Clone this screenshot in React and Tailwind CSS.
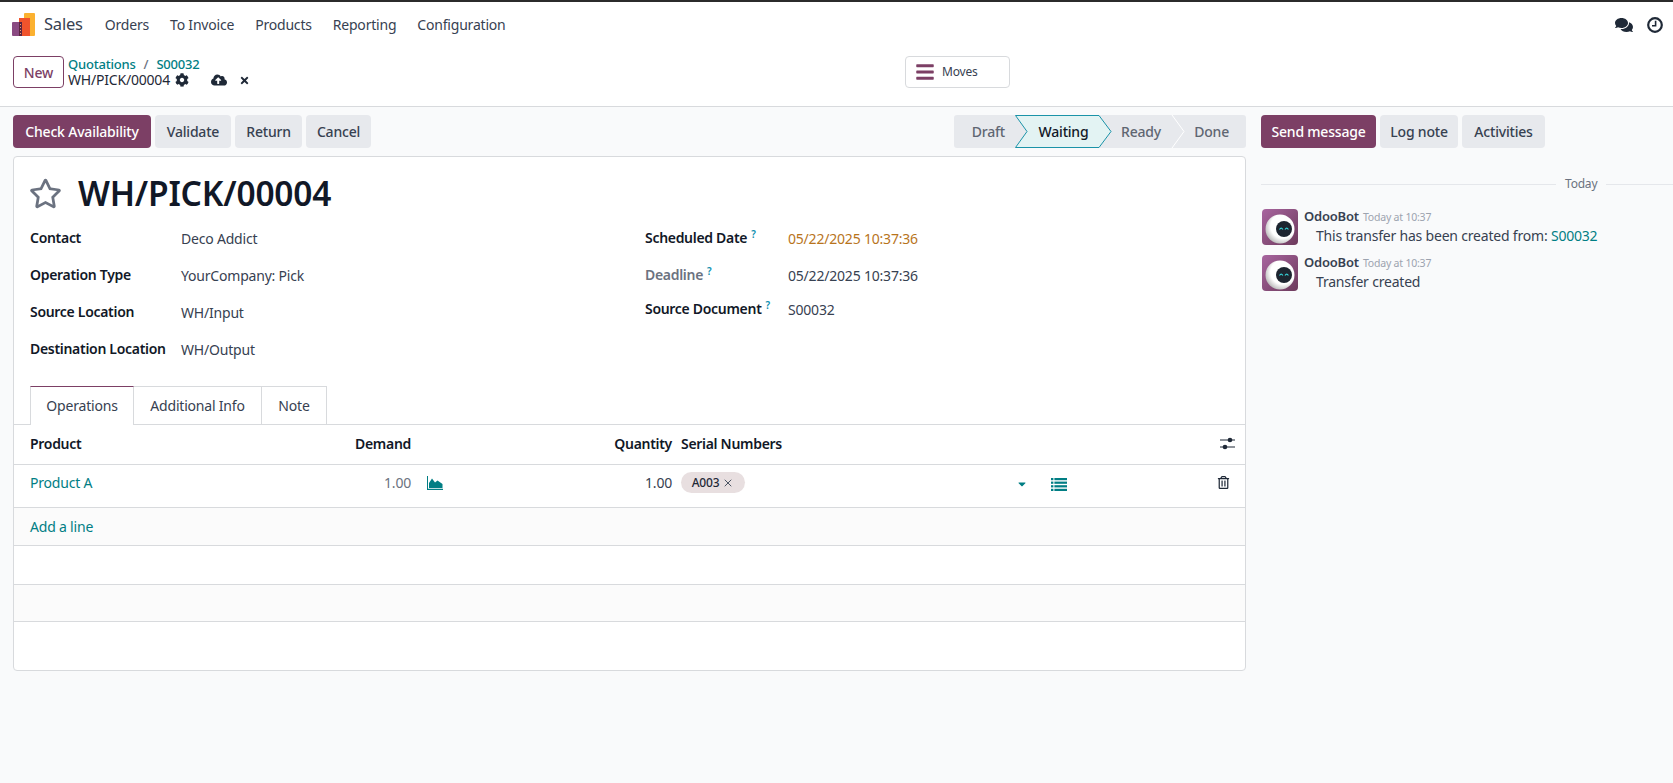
import React from 'react';
import { X } from 'lucide-react';
import { FaCog, FaCloudUploadAlt, FaTimes, FaRegStar, FaComments, FaRegTrashAlt, FaBars, FaCaretDown } from 'react-icons/fa';

const menu = ['Orders', 'To Invoice', 'Products', 'Reporting', 'Configuration'];

const leftFields = [
  ['Contact', 'Deco Addict'],
  ['Operation Type', 'YourCompany: Pick'],
  ['Source Location', 'WH/Input'],
  ['Destination Location', 'WH/Output'],
];

const rowGrid = 'grid grid-cols-[270px_111px_149px_112px_356px_1fr] items-center pl-[16px] pr-[14px]';

const Logo = () => (
  <svg width="24" height="24" viewBox="0 0 24 24" className="shrink-0">
    <rect x="12" y="0" width="11" height="23" rx="1" fill="#fbb130" />
    <rect x="7" y="5" width="11" height="18" fill="#f0532c" />
    <rect x="0" y="9" width="9" height="14" rx="1" fill="#8a4a82" />
    <rect x="7" y="9" width="3" height="14" fill="#5b2540" />
    <rect x="8" y="11" width="1" height="1" fill="#f0a070" />
    <rect x="8" y="14" width="1" height="1" fill="#f0a070" />
    <rect x="8" y="17" width="1" height="1" fill="#f0a070" />
    <rect x="8" y="20" width="1" height="1" fill="#f0a070" />
  </svg>
);

const BotAvatar = ({ id }) => (
  <svg width="36" height="36" viewBox="0 0 36 36" className="shrink-0 rounded-[4px]">
    <defs>
      <linearGradient id={`bg${id}`} x1="0" y1="0" x2="1" y2="1">
        <stop offset="0" stopColor="#a8659f" />
        <stop offset="1" stopColor="#6d3a5c" />
      </linearGradient>
      <radialGradient id={`ball${id}`} cx="0.6" cy="0.4" r="0.7">
        <stop offset="0.6" stopColor="#ffffff" />
        <stop offset="1" stopColor="#a9a9a9" />
      </radialGradient>
    </defs>
    <rect width="36" height="36" fill={`url(#bg${id})`} />
    <circle cx="18" cy="20" r="14.5" fill={`url(#ball${id})`} />
    <circle cx="22" cy="20" r="8" fill="#1d2530" />
    <path d="M17.5 20.5 q1.7 -2.6 3.4 0 M23 20.5 q1.7 -2.6 3.4 0" stroke="#35d0d6" strokeWidth="1.2" fill="none" />
  </svg>
);

const ClockIcon = () => (
  <svg width="16" height="16" viewBox="0 0 16 16" fill="none" stroke="#1f2937">
    <circle cx="8" cy="8" r="6.8" strokeWidth="2.2" />
    <path d="M8.6 3.8 V8.8 H5" strokeWidth="1.6" />
  </svg>
);

const AreaIcon = () => (
  <svg width="16" height="14" viewBox="0 0 16 14" fill="#017e84">
    <path d="M0 0 H1 V12.8 H16 V14 H0 Z" />
    <path d="M2 12 V7 L5 2.5 L8 6.5 L10.5 4.5 L15.5 8 V12 Z" />
  </svg>
);

const ListIcon = () => (
  <svg width="16" height="13" viewBox="0 0 16 13" fill="#017e84">
    <rect x="0" y="0" width="2.4" height="2.2" />
    <rect x="3.4" y="0" width="12.6" height="2.2" />
    <rect x="0" y="3.6" width="2.4" height="2.2" />
    <rect x="3.4" y="3.6" width="12.6" height="2.2" />
    <rect x="0" y="7.2" width="2.4" height="2.2" />
    <rect x="3.4" y="7.2" width="12.6" height="2.2" />
    <rect x="0" y="10.8" width="2.4" height="2.2" />
    <rect x="3.4" y="10.8" width="12.6" height="2.2" />
  </svg>
);

const Help = () => <sup className="ml-[4px] text-[10px] font-semibold text-[#0e8fb0]">?</sup>;

const ActionBtn = ({ children, primary, className }) => (
  <button className={`h-[33px] rounded-[4px] text-[14px] font-medium ${primary ? 'bg-[#7c3f65] text-white' : 'bg-[#e7e9ed] text-[#374151]'} ${className}`}>
    {children}
  </button>
);

const Statusbar = () => (
  <div className="flex h-[33px] w-[292px] rounded-[3px] bg-[#e7e9ed] text-[14px] font-medium text-[#5f6672]">
    <div className="flex w-[61px] items-center justify-end pr-[10px]">Draft</div>
    <div className="relative flex w-[97px] items-center justify-center text-[#111827]">
      <svg viewBox="0 0 97 33" className="absolute inset-0 h-full w-full">
        <path d="M0.5 0.5 H84 L96 16.5 L84 32.5 H0.5 L12 16.5 Z" fill="#e3f3f3" stroke="#1a93a8" />
      </svg>
      <span className="relative">Waiting</span>
    </div>
    <div className="flex w-[56px] items-center justify-end pr-[7px]">Ready</div>
    <div className="relative flex flex-1 items-center justify-end pr-[17px]">
      <svg viewBox="0 0 16 33" className="absolute left-[3px] top-0 h-[33px] w-[16px]">
        <path d="M1 0 L13 16.5 L1 33" fill="none" stroke="#ffffff" />
      </svg>
      Done
    </div>
  </div>
);

export default function App() {
  return (
    <div className="flex h-[783px] flex-col overflow-hidden bg-[#f9fafb] font-['Noto_Sans',sans-serif] text-[14px] tracking-[-0.2px] text-[#374151]">
      <header className="border-t-2 border-[#2b2b2b] bg-white">
        <nav className="flex h-[45px] items-center pl-[12px] pr-[10px]">
          <Logo />
          <span className="ml-[8px] text-[16.5px] text-[#374151]">Sales</span>
          <div className="ml-[22px] flex gap-[21px] text-[14px] text-[#374151]">
            {menu.map((m) => <span key={m}>{m}</span>)}
          </div>
          <div className="ml-auto flex items-center gap-[14px] text-[#1f2937]">
            <FaComments size={18} />
            <ClockIcon />
          </div>
        </nav>
        <div className="flex h-[60px] items-start border-b border-[#d8dadd] pl-[13px] pt-[9px]">
          <button className="h-[32px] w-[51px] rounded-[4px] border border-[#7c3f65] text-[14px] font-medium text-[#7c3f65]">New</button>
          <div className="ml-[4px] w-[190px] leading-[16px]">
            <div className="flex gap-[8px] text-[13px] font-medium text-[#017e84]">
              <span>Quotations</span><span className="text-[#6b7280]">/</span><span>S00032</span>
            </div>
            <div className="flex items-center text-[14px] text-[#1f2937]">
              WH/PICK/00004
              <FaCog size={14} className="ml-[5px]" />
              <FaCloudUploadAlt size={16} className="ml-[22px]" />
              <FaTimes size={11} className="ml-[12px]" />
            </div>
          </div>
          <button className="ml-[647px] flex h-[32px] w-[105px] items-center gap-[7px] rounded-[4px] border border-[#d8dadd] pl-[9px] text-[12px] text-[#374151]">
            <FaBars size={20} className="text-[#7c3f65]" /> Moves
          </button>
        </div>
      </header>

      <main className="flex flex-1 items-start pl-[13px] pt-[8px]">
        <section className="w-[1233px]">
          <div className="flex items-center justify-between">
            <div className="flex gap-[4px]">
              <ActionBtn primary className="w-[138px]">Check Availability</ActionBtn>
              <ActionBtn className="w-[76px]">Validate</ActionBtn>
              <ActionBtn className="w-[67px]">Return</ActionBtn>
              <ActionBtn className="w-[65px]">Cancel</ActionBtn>
            </div>
            <Statusbar />
          </div>

          <div className="mt-[8px] h-[515px] rounded-[4px] border border-[#d8dadd] bg-white">
            <div className="flex items-center pl-[15px] pt-[16px]">
              <FaRegStar size={33} className="text-[#6b7280]" />
              <h1 className="ml-[16px] text-[33.5px] font-semibold leading-[40px] text-[#111827]">WH/PICK/00004</h1>
            </div>

            <div className="mt-[6px] flex pl-[16px]">
              <div className="w-[615px]">
                {leftFields.map(([label, value]) => (
                  <div key={label} className="flex h-[37px] items-center">
                    <span className="w-[151px] font-semibold tracking-[-0.3px] text-[#111827]">{label}</span>
                    <span className="pt-[2px]">{value}</span>
                  </div>
                ))}
              </div>
              <div>
                <div className="flex h-[37px] items-center">
                  <span className="w-[143px] font-semibold tracking-[-0.3px] text-[#111827]">Scheduled Date<Help /></span>
                  <span className="pt-[2px] text-[#b8741c]">05/22/2025 10:37:36</span>
                </div>
                <div className="flex h-[36px] items-center">
                  <span className="w-[143px] font-semibold tracking-[-0.3px] text-[#6b7280]">Deadline<Help /></span>
                  <span className="pt-[2px]">05/22/2025 10:37:36</span>
                </div>
                <div className="flex h-[32px] items-center">
                  <span className="w-[143px] font-semibold tracking-[-0.3px] text-[#111827]">Source Document<Help /></span>
                  <span className="pt-[2px]">S00032</span>
                </div>
              </div>
            </div>

            <div className="mt-[19px] flex h-[39px] border-b border-[#d8dadd] pl-[16px]">
              <div className="flex h-[39px] w-[104px] items-center justify-center border-x border-t border-x-[#d8dadd] border-t-[#7c3f65] bg-white pb-[1px]">Operations</div>
              <div className="flex h-[38px] w-[128px] items-center justify-center border-r border-t border-[#d8dadd] pb-[1px]">Additional Info</div>
              <div className="flex h-[38px] w-[65px] items-center justify-center border-r border-t border-[#d8dadd] pb-[1px]">Note</div>
            </div>

            <div className={`${rowGrid} h-[40px] border-b border-[#d8dadd] pb-[2px] font-semibold tracking-[-0.3px] text-[#111827]`}>
              <span>Product</span>
              <span className="text-right">Demand</span>
              <span />
              <span className="text-right">Quantity</span>
              <span className="pl-[9px]">Serial Numbers</span>
              <span className="mr-[-4px] flex justify-end">
                <svg width="15" height="13" viewBox="0 0 15 13" fill="#1f2937">
                  <rect x="0" y="2.5" width="15" height="1" />
                  <circle cx="10" cy="3" r="2.3" />
                  <rect x="0" y="9.5" width="15" height="1" />
                  <circle cx="5" cy="10" r="2.3" />
                </svg>
              </span>
            </div>

            <div className={`${rowGrid} h-[43px] border-b border-[#d8dadd] pb-[7px]`}>
              <span className="text-[#017e84]">Product A</span>
              <span className="text-right text-[#6b7280]">1.00</span>
              <span className="pl-[16px]"><AreaIcon /></span>
              <span className="text-right">1.00</span>
              <span className="flex items-center justify-between pl-[9px]">
                <span className="flex h-[21px] w-[64px] items-center justify-center gap-[3px] rounded-full bg-[#e8dfe0] text-[12px] font-medium text-[#1f2937]">
                  A003 <X size={12} strokeWidth={2} className="text-[#4b5563]" />
                </span>
                <FaCaretDown size={12} className="mt-[3px] text-[#017e84]" />
              </span>
              <span className="flex items-center justify-between pl-[23px]">
                <span className="mt-[3px]"><ListIcon /></span>
                <FaRegTrashAlt size={13} className="mr-[1px] text-[#1f2937]" />
              </span>
            </div>

            <div className={`${rowGrid} h-[38px] border-b border-[#d8dadd] bg-[#fbfbfb] pb-[1px]`}>
              <span className="text-[#017e84]">Add a line</span>
            </div>
            <div className="h-[39px] border-b border-[#d8dadd]" />
            <div className="h-[37px] border-b border-[#d8dadd] bg-[#fbfbfb]" />
          </div>
        </section>

        <aside className="ml-[15px] flex-1">
          <div className="flex gap-[4px]">
            <ActionBtn primary className="w-[115px]">Send message</ActionBtn>
            <ActionBtn className="w-[78px]">Log note</ActionBtn>
            <ActionBtn className="w-[83px]">Activities</ActionBtn>
          </div>

          <div className="mt-[27px] flex items-center gap-[9px] text-[12px] text-[#6b7280]">
            <div className="h-px w-[295px] bg-[#e5e7eb]" />
            <span>Today</span>
            <div className="h-px flex-1 bg-[#e5e7eb]" />
          </div>

          <div className="mt-[16px] flex flex-col gap-[10px] pl-[1px]">
            {[
              <>This transfer has been created from: <span className="text-[#017e84]">S00032</span></>,
              'Transfer created',
            ].map((body, i) => (
              <div key={i} className="flex h-[36px]">
                <BotAvatar id={i} />
                <div className="ml-[6px]">
                  <div className="flex items-baseline gap-[4px] leading-[15px]">
                    <span className="text-[13px] font-semibold text-[#374151]">OdooBot</span>
                    <span className="text-[10.5px] text-[#9ca3af]">Today at 10:37</span>
                  </div>
                  <div className="mt-[1px] pl-[12px] text-[14px] leading-[20px]">{body}</div>
                </div>
              </div>
            ))}
          </div>
        </aside>
      </main>
    </div>
  );
}
